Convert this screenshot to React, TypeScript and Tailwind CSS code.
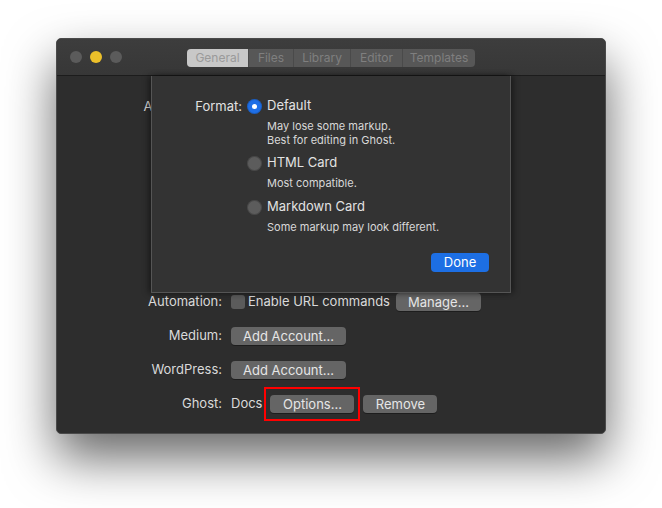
import React from "react";

const font = { fontFamily: "Inter, 'Noto Sans', 'Liberation Sans', sans-serif" };

function Btn({ children, w }: { children: React.ReactNode; w: string }) {
  return (
    <div
      className={`${w} h-[18px] rounded-[4px] bg-[#656565] text-[#e6e6e6] text-[13px] leading-[18px] text-center shadow-[0_1px_0_rgba(0,0,0,0.35)]`}
    >
      {children}
    </div>
  );
}

function Radio({ on }: { on?: boolean }) {
  return on ? (
    <div className="w-[15px] h-[15px] rounded-full bg-[#1f6fe6] flex items-center justify-center shadow-[inset_0_0_0_1px_rgba(0,0,0,0.15)]">
      <div className="w-[5px] h-[5px] rounded-full bg-white" />
    </div>
  ) : (
    <div className="w-[15px] h-[15px] rounded-full bg-[#5c5c5c] shadow-[inset_0_0_0_1px_rgba(0,0,0,0.2)]" />
  );
}

export default function App() {
  const tabs = [
    { t: "General", w: "w-[61px]", sel: true },
    { t: "Files", w: "w-[45px]" },
    { t: "Library", w: "w-[57px]" },
    { t: "Editor", w: "w-[52px]" },
    { t: "Templates", w: "w-[73px]" },
  ];
  return (
    <div className="w-[662px] h-[508px] bg-white pt-[38px] pl-[56px]" style={font}>
      <div className="w-[550px] h-[396px] rounded-[5px] bg-[#2d2d2d] overflow-hidden border border-[#4a4a4a] shadow-[0_24px_50px_rgba(0,0,0,0.6)] flex flex-col">
        {/* title bar */}
        <div className="h-[37px] shrink-0 bg-gradient-to-b from-[#3d3d3d] to-[#373737] border-b border-[#1c1c1c] flex items-center relative">
          <div className="flex gap-[8px] pl-[13px]">
            <div className="w-[12px] h-[12px] rounded-full bg-[#5b5b5b]" />
            <div className="w-[12px] h-[12px] rounded-full bg-[#ecc02a]" />
            <div className="w-[12px] h-[12px] rounded-full bg-[#5b5b5b]" />
          </div>
          <div className="absolute left-[130px] top-[10px] flex h-[18px] rounded-[4px] overflow-hidden bg-[#575757]">
            {tabs.map((tb, i) => (
              <div
                key={tb.t}
                className={`${tb.w} text-[12px] leading-[18px] text-center ${
                  tb.sel ? "bg-[#c8c8c8] text-[#9a9a9a]" : "text-[#7f7f7f]"
                } ${i > 0 && !tb.sel ? "border-l border-[#4a4a4a]" : ""}`}
              >
                {tb.t}
              </div>
            ))}
          </div>
        </div>

        {/* body */}
        <div className="relative flex-1 text-[13px] text-[#dadada]">
          <div className="pt-[14px] flex flex-col">
            <div className="h-[34px] flex items-center">
              <div className="w-[94px] overflow-hidden">
                <div className="w-[165px] text-right">Appearance:</div>
              </div>
            </div>
            <div className="h-[161px]" />
            <div className="h-[34px] flex items-center">
              <div className="w-[165px] text-right">Automation:</div>
              <div className="ml-[9px] w-[14px] h-[14px] rounded-[3px] bg-[#5b5b5b]" />
              <div className="ml-[3px]">Enable URL commands</div>
              <div className="ml-[6px]">
                <Btn w="w-[85px]">Manage…</Btn>
              </div>
            </div>
            <div className="h-[34px] flex items-center">
              <div className="w-[165px] text-right">Medium:</div>
              <div className="ml-[9px]">
                <Btn w="w-[115px]">Add Account…</Btn>
              </div>
            </div>
            <div className="h-[34px] flex items-center">
              <div className="w-[165px] text-right">WordPress:</div>
              <div className="ml-[9px]">
                <Btn w="w-[115px]">Add Account…</Btn>
              </div>
            </div>
            <div className="h-[34px] flex items-center">
              <div className="w-[165px] text-right">Ghost:</div>
              <div className="ml-[9px]">Docs</div>
              <div className="ml-[2px] border-2 border-[#ff0000] px-[4px] py-[6px]">
                <Btn w="w-[84px]">Options…</Btn>
              </div>
              <div className="ml-[3px]">
                <Btn w="w-[74px]">Remove</Btn>
              </div>
            </div>
          </div>

          {/* sheet */}
          <div className="absolute left-[94px] top-0 w-[360px] h-[217px] bg-[#333333] border border-[#555555] border-t-0 shadow-[-3px_0_6px_rgba(0,0,0,0.35),3px_0_6px_rgba(0,0,0,0.35)] text-[#e2e2e2]">
            <div className="pl-[42px] pt-[22px] flex">
              <div className="w-[48px] text-right leading-[16px]">Format:</div>
              <div className="ml-[5px] flex flex-col">
                <div className="flex items-center h-[16px]">
                  <Radio on />
                  <div className="ml-[5px]">Default</div>
                </div>
                <div className="ml-[20px] mt-[5px] text-[11px] leading-[14px] text-[#d8d8d8]">
                  <div>May lose some markup.</div>
                  <div>Best for editing in Ghost.</div>
                </div>
                <div className="flex items-center h-[16px] mt-[8px]">
                  <Radio />
                  <div className="ml-[5px]">HTML Card</div>
                </div>
                <div className="ml-[20px] mt-[5px] text-[11px] leading-[14px] text-[#d8d8d8]">
                  Most compatible.
                </div>
                <div className="flex items-center h-[16px] mt-[9px]">
                  <Radio />
                  <div className="ml-[5px]">Markdown Card</div>
                </div>
                <div className="ml-[20px] mt-[5px] text-[11px] leading-[14px] text-[#d8d8d8]">
                  Some markup may look different.
                </div>
              </div>
            </div>
            <div className="flex justify-end pr-[21px] mt-[19px]">
              <div className="w-[58px] h-[19px] rounded-[4px] bg-[#1d6fe4] text-white text-[13px] leading-[19px] text-center">
                Done
              </div>
            </div>
          </div>
        </div>
      </div>
    </div>
  );
}
